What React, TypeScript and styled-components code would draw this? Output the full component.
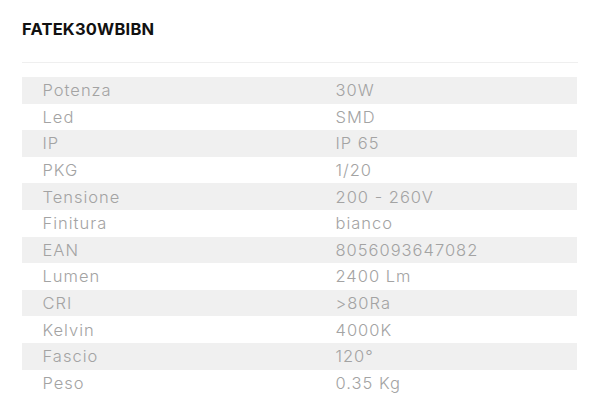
import React from "react";
import styled, { createGlobalStyle } from "styled-components";

const GlobalStyle = createGlobalStyle`
  html, body { margin: 0; padding: 0; background: #ffffff; }
  body { font-family: "Inter", "Liberation Sans", sans-serif; }
`;

const Page = styled.div`
  width: 600px;
  height: 419px;
  box-sizing: border-box;
  padding: 19px 22px 0 22px;
  background: #ffffff;
`;

const Title = styled.h1`
  margin: 0;
  font-family: "Inter", "Liberation Sans", sans-serif;
  font-weight: 700;
  font-size: 16.5px;
  line-height: 20px;
  color: #111111;
  letter-spacing: 0.2px;
`;

const Divider = styled.hr`
  margin: 23px 0 0 0;
  border: none;
  border-top: 1px solid #efefef;
  height: 0;
`;

const Table = styled.div`
  margin-top: 14px;
  display: grid;
  grid-template-columns: 293px 1fr;
  width: 555px;
`;

const Row = styled.div<{ $shaded: boolean }>`
  display: contents;
  & > div {
    background: ${(p) => (p.$shaded ? "#f0f0f0" : "#ffffff")};
  }
`;

const Cell = styled.div`
  height: 26.6px;
  display: flex;
  align-items: center;
  padding-left: 20.5px;
  font-family: "Inter", "Liberation Sans", sans-serif;
  font-weight: 300;
  font-size: 16.5px;
  letter-spacing: 1px;
  color: #a3a3a3;
  white-space: nowrap;
`;

const specs: [string, string][] = [
  ["Potenza", "30W"],
  ["Led", "SMD"],
  ["IP", "IP 65"],
  ["PKG", "1/20"],
  ["Tensione", "200 - 260V"],
  ["Finitura", "bianco"],
  ["EAN", "8056093647082"],
  ["Lumen", "2400 Lm"],
  ["CRI", ">80Ra"],
  ["Kelvin", "4000K"],
  ["Fascio", "120°"],
  ["Peso", "0.35 Kg"],
];

export default function App() {
  return (
    <>
      <GlobalStyle />
      <Page>
        <Title>FATEK30WBIBN</Title>
        <Divider />
        <Table>
          {specs.map(([k, v], i) => (
            <Row key={k} $shaded={i % 2 === 0}>
              <Cell>{k}</Cell>
              <Cell>{v}</Cell>
            </Row>
          ))}
        </Table>
      </Page>
    </>
  );
}
